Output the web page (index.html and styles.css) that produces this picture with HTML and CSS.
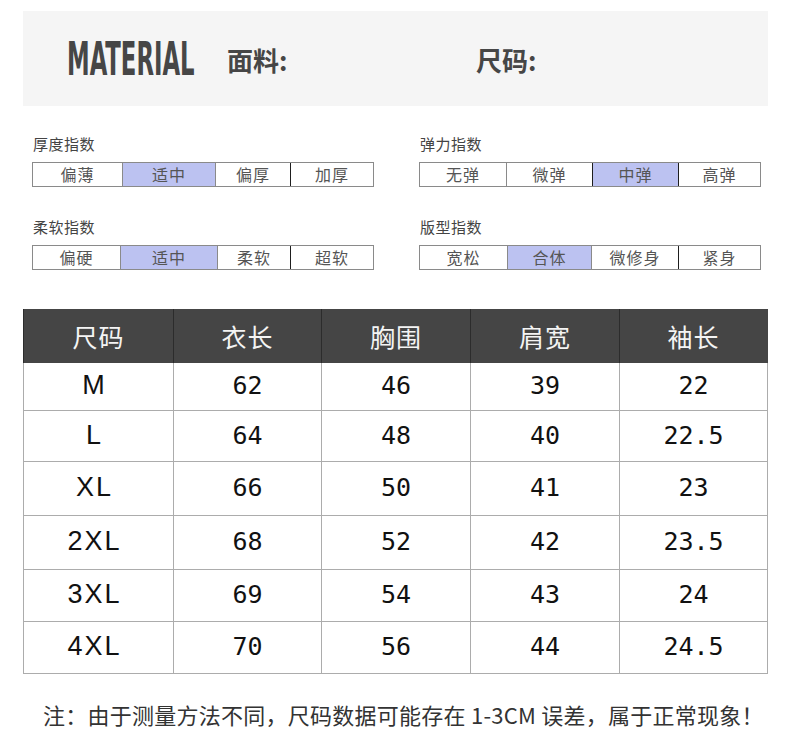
FILE: index.html
```html
<!DOCTYPE html>
<html lang="zh-CN">
<head>
<meta charset="utf-8">
<title>尺码表</title>
<link rel="stylesheet" href="styles.css">
</head>
<body>
<div class="page">
  <header class="banner">
    <div class="brand"><span class="brand-text">MATERIAL</span></div>
    <div class="field field-fabric">面料:</div>
    <div class="field">尺码:</div>
  </header>

  <section class="indexes">
    <div class="index">
      <div class="index-label">厚度指数</div>
      <div class="bar bar-thick">
        <div class="opt">偏薄</div>
        <div class="opt on">适中</div>
        <div class="opt">偏厚</div>
        <div class="opt dark">加厚</div>
      </div>
    </div>
    <div class="index">
      <div class="index-label">弹力指数</div>
      <div class="bar bar-elastic">
        <div class="opt">无弹</div>
        <div class="opt">微弹</div>
        <div class="opt on dark">中弹</div>
        <div class="opt dark">高弹</div>
      </div>
    </div>
    <div class="index">
      <div class="index-label">柔软指数</div>
      <div class="bar bar-soft">
        <div class="opt">偏硬</div>
        <div class="opt on">适中</div>
        <div class="opt">柔软</div>
        <div class="opt dark">超软</div>
      </div>
    </div>
    <div class="index">
      <div class="index-label">版型指数</div>
      <div class="bar bar-fit">
        <div class="opt">宽松</div>
        <div class="opt on">合体</div>
        <div class="opt">微修身</div>
        <div class="opt dark">紧身</div>
      </div>
    </div>
  </section>

  <section class="sizes">
    <div class="row head">
      <div class="cell">尺码</div>
      <div class="cell">衣长</div>
      <div class="cell">胸围</div>
      <div class="cell">肩宽</div>
      <div class="cell">袖长</div>
    </div>
    <div class="row">
      <div class="cell size">M</div>
      <div class="cell num">62</div>
      <div class="cell num">46</div>
      <div class="cell num">39</div>
      <div class="cell num">22</div>
    </div>
    <div class="row">
      <div class="cell size">L</div>
      <div class="cell num">64</div>
      <div class="cell num">48</div>
      <div class="cell num">40</div>
      <div class="cell num">22.5</div>
    </div>
    <div class="row">
      <div class="cell size">XL</div>
      <div class="cell num">66</div>
      <div class="cell num">50</div>
      <div class="cell num">41</div>
      <div class="cell num">23</div>
    </div>
    <div class="row">
      <div class="cell size">2XL</div>
      <div class="cell num">68</div>
      <div class="cell num">52</div>
      <div class="cell num">42</div>
      <div class="cell num">23.5</div>
    </div>
    <div class="row">
      <div class="cell size">3XL</div>
      <div class="cell num">69</div>
      <div class="cell num">54</div>
      <div class="cell num">43</div>
      <div class="cell num">24</div>
    </div>
    <div class="row">
      <div class="cell size">4XL</div>
      <div class="cell num">70</div>
      <div class="cell num">56</div>
      <div class="cell num">44</div>
      <div class="cell num">24.5</div>
    </div>
  </section>

  <p class="note">注：由于测量方法不同，尺码数据可能存在 1-3CM 误差，属于正常现象！</p>
</div>
</body>
</html>
```

FILE: styles.css
```css
* { box-sizing: border-box; }

html, body {
  margin: 0;
  padding: 0;
  background: #ffffff;
}

body {
  font-family: "Noto Sans CJK SC", "Noto Sans", sans-serif;
  color: #333;
}

.page {
  width: 790px;
  padding-top: 11px;
}

/* ---------- banner ---------- */
.banner {
  margin-left: 23px;
  width: 745px;
  height: 95px;
  background: #f5f5f5;
  display: flex;
  align-items: center;
  padding-left: 44px;
}

.brand {
  width: 160px;
  height: 50px;
  display: flex;
  align-items: center;
  overflow: visible;
  white-space: nowrap;
}

.brand-text {
  display: inline-block;
  font-family: "DejaVu Sans Condensed", "DejaVu Sans", sans-serif;
  font-weight: bold;
  font-size: 46px;
  line-height: 50px;
  color: #464646;
  transform: scaleX(0.55);
  transform-origin: left center;
}

.field {
  font-family: "Noto Sans CJK SC", sans-serif;
  font-weight: bold;
  font-size: 26px;
  color: #464646;
  line-height: 34px;
  margin-top: 2px;
}

.field-fabric {
  width: 249px;
}

/* ---------- indexes ---------- */
.indexes {
  margin-left: 32px;
  padding-top: 28px;
  display: grid;
  grid-template-columns: 342px 342px;
  column-gap: 45px;
  row-gap: 30px;
}

.index-label {
  font-size: 15px;
  line-height: 20px;
  letter-spacing: 0.5px;
  color: #444;
  padding-left: 1px;
  margin-bottom: 8px;
}

.bar {
  display: grid;
  height: 25px;
  border: 1px solid #8a8a8a;
}

.bar-thick   { grid-template-columns: 89px 93px 75px 1fr; }
.bar-soft    { grid-template-columns: 87px 97px 73px 1fr; }
.bar-elastic { grid-template-columns: 86px 86px 86px 1fr; }
.bar-fit     { grid-template-columns: 87px 84px 87px 1fr; }

.opt {
  display: flex;
  align-items: center;
  justify-content: center;
  font-size: 16px;
  letter-spacing: 1px;
  color: #555;
  border-left: 1px solid #8a8a8a;
  line-height: 1;
  padding-bottom: 1px;
}

.opt:first-child { border-left: none; }

.opt.dark { border-left-color: #1e1e1e; }

.opt.on { background: #bcc2f1; }

/* ---------- size table ---------- */
.sizes {
  margin-top: 39px;
  margin-left: 23px;
  width: 745px;
}

.row {
  display: grid;
  grid-template-columns: 150px 148px 149px 149px 149px;
  height: 52px;
  border-bottom: 1px solid #acacac;
}

.row .cell {
  display: flex;
  align-items: center;
  justify-content: center;
  border-left: 1px solid #acacac;
  color: #111;
}

.row .cell:last-child { border-right: 1px solid #acacac; }

.row.head {
  height: 54px;
  background: #454545;
  border-bottom: none;
}

.row.head .cell {
  color: #f4f4f4;
  font-size: 25px;
  letter-spacing: 1px;
  border-left-color: #2c2c2c;
}

.row.head .cell:last-child { border-right-color: #454545; }

.row:nth-child(2) { height: 48px; }
.row:nth-child(3) { height: 51px; }
.row:nth-child(4) { height: 54px; }
.row:nth-child(5) { height: 54px; }

.size {
  font-family: "Liberation Sans", Arial, sans-serif;
  font-size: 27px;
  letter-spacing: 2px;
  padding-right: 8px;
  padding-bottom: 2px;
}

.num {
  font-family: "DejaVu Sans Mono", monospace;
  font-size: 25px;
  padding-bottom: 2px;
  color: #1a1a1a;
}

/* ---------- note ---------- */
.note {
  margin: 25px 0 0 43px;
  font-size: 22px;
  line-height: 30px;
  letter-spacing: 0.25px;
  color: #333;
  white-space: nowrap;
}
```
